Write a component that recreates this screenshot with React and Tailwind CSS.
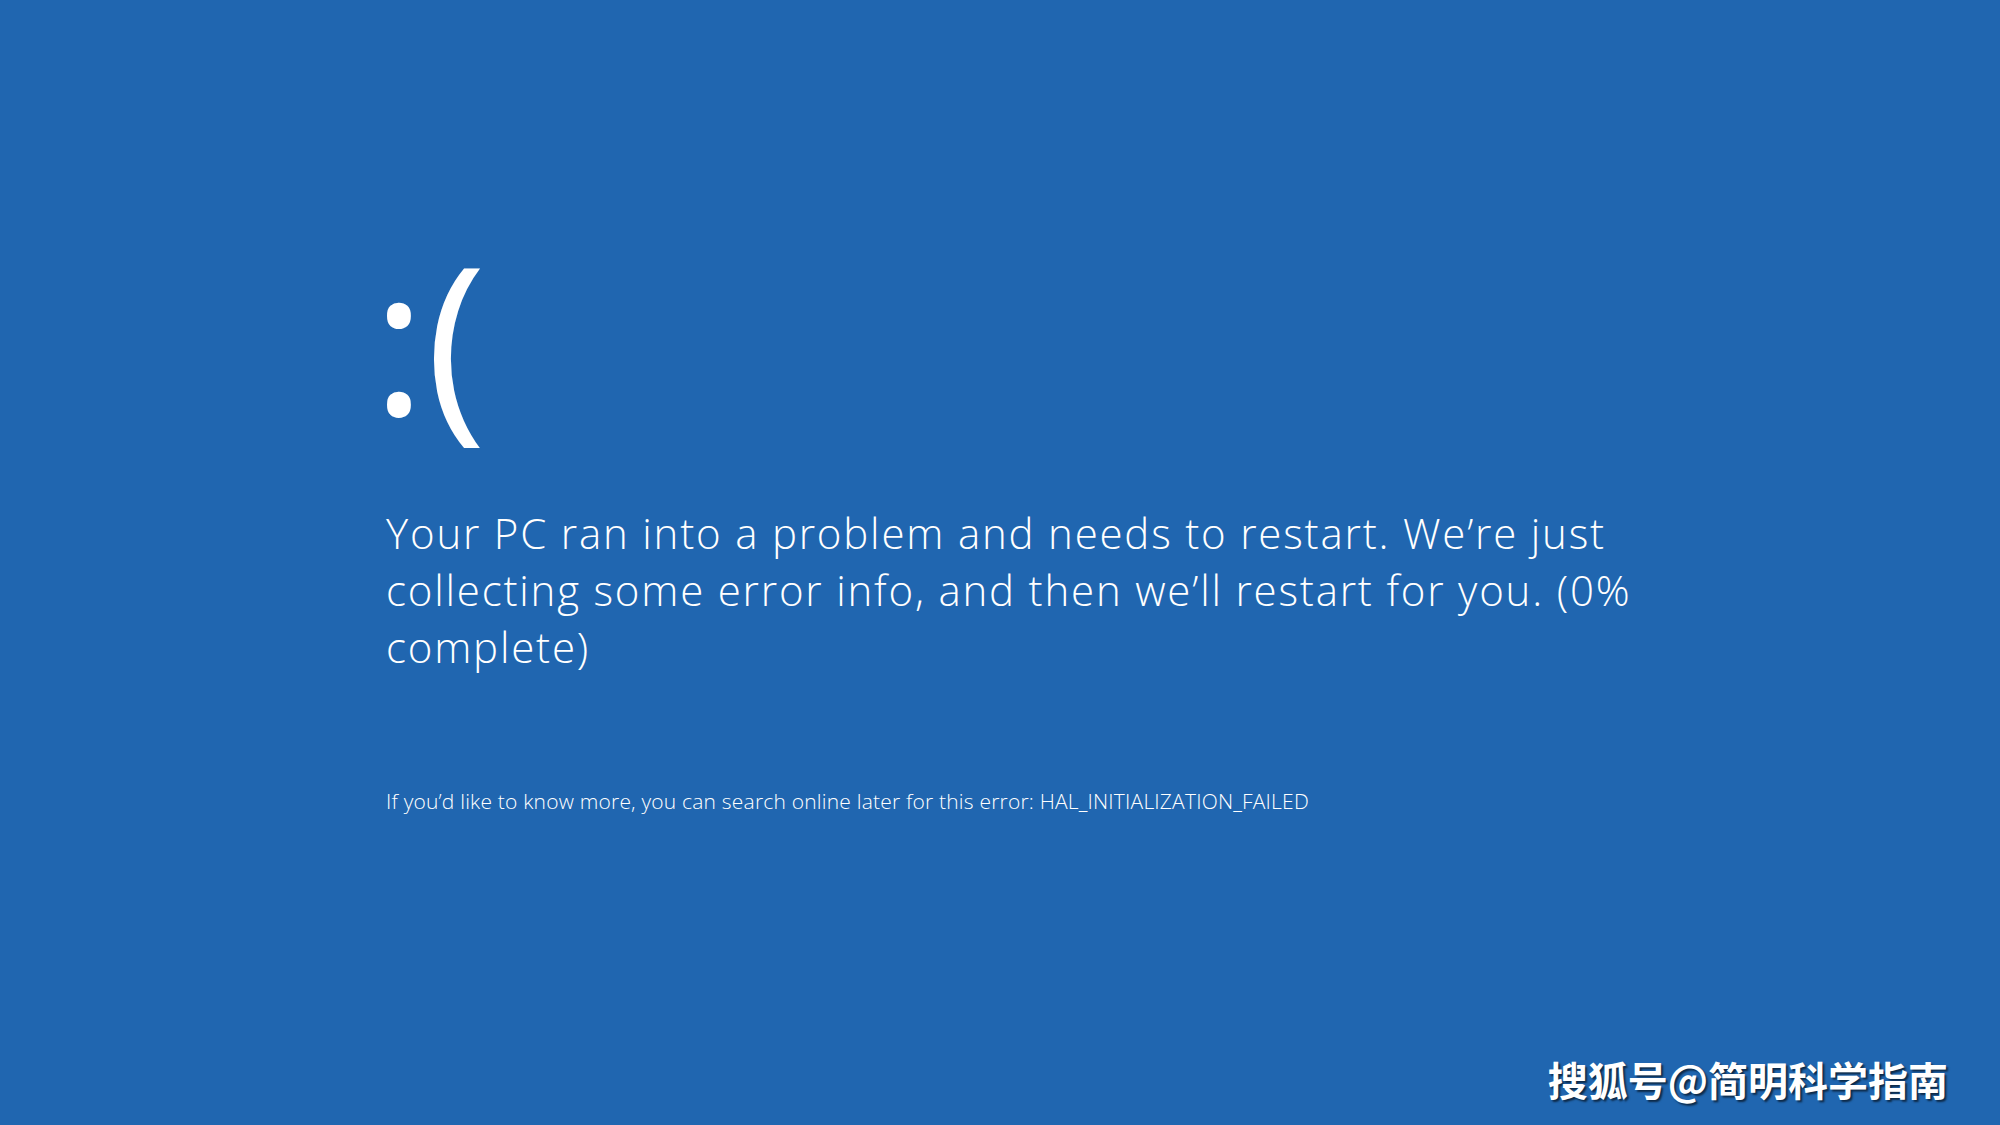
export default function App() {
  return (
    <div className="relative w-[2000px] h-[1125px] overflow-hidden bg-[#2066b0] text-white font-['Open_Sans','Noto_Sans',sans-serif]">
      <div className="flex flex-col pl-[386px] pt-[216px]">
        <div className="-ml-[14px] text-[205px] leading-[240px] font-normal">:(</div>
        <div className="mt-[48px] flex flex-col text-[42px] leading-[57px] font-light tracking-[1.8px] whitespace-nowrap">
          <span>Your PC ran into a problem and needs to restart. We’re just</span>
          <span>collecting some error info, and then we’ll restart for you. (0%</span>
          <span>complete)</span>
        </div>
        <div className="mt-[112px] text-[21px] leading-[28px] font-light tracking-[0.2px] whitespace-nowrap">
          If you’d like to know more, you can search online later for this error: HAL_INITIALIZATION_FAILED
        </div>
      </div>
      <div className="absolute right-[52px] bottom-[22px] text-[40px] leading-[48px] font-bold font-['Noto_Sans_CJK_SC',sans-serif] [text-shadow:2px_2px_2px_rgba(0,0,0,0.6)]">
        搜狐号@简明科学指南
      </div>
    </div>
  );
}
